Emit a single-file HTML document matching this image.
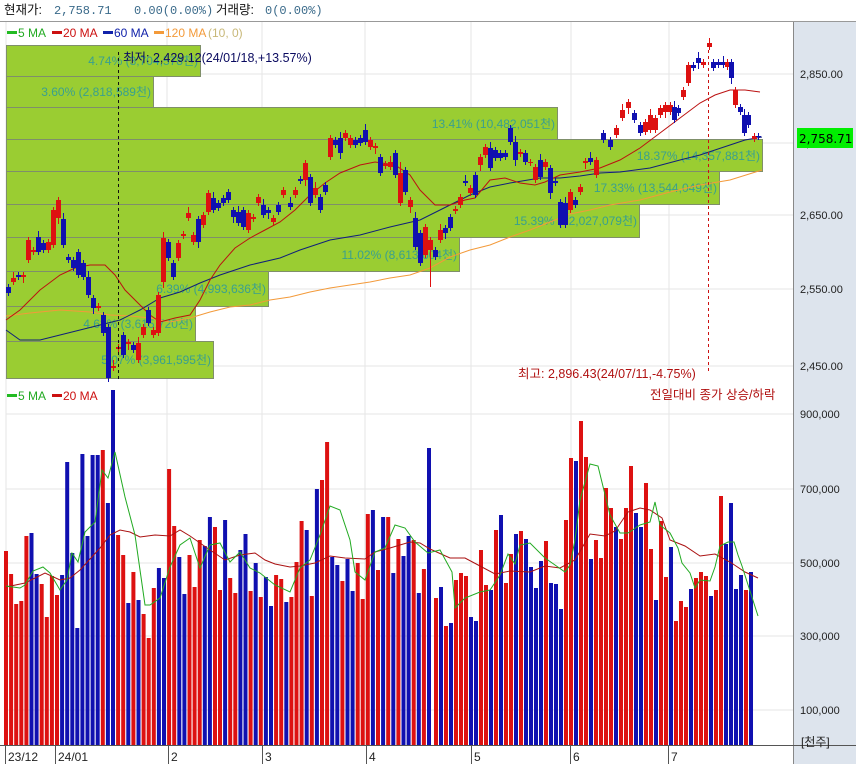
<!DOCTYPE html>
<html><head><meta charset="utf-8">
<style>
html,body{margin:0;padding:0;background:#fff;width:856px;height:764px;overflow:hidden}
svg{display:block}
text{font-family:"Liberation Sans","Noto Sans CJK KR",sans-serif}
.ax{font-family:"DejaVu Sans","Liberation Sans",sans-serif;font-size:11px;fill:#222}
</style></head><body>
<svg id="s" width="856" height="764" xmlns="http://www.w3.org/2000/svg">
<rect x="0" y="0" width="856" height="764" fill="#fff"/>
<text x="4" y="14" font-size="12.5" fill="#111">현재가:</text>
<text x="54" y="14" style="font-family:'Liberation Mono','Noto Sans CJK KR',monospace;font-size:12px" fill="#3a6a8a">2,758.71</text>
<text x="134" y="14" style="font-family:'Liberation Mono','Noto Sans CJK KR',monospace;font-size:12px" fill="#3a6a8a">0.00(0.00%)</text>
<text x="216" y="14" font-size="12.5" fill="#111">거래량:</text>
<text x="265" y="14" style="font-family:'Liberation Mono','Noto Sans CJK KR',monospace;font-size:12px" fill="#3a6a8a">0(0.00%)</text>
<line x1="0" y1="21.5" x2="856" y2="21.5" stroke="#999"/>
<rect x="793" y="22" width="63" height="742" fill="#dde4ed"/>
<line x1="793.5" y1="22" x2="793.5" y2="764" stroke="#888"/>
<line x1="0" y1="745.5" x2="856" y2="745.5" stroke="#555"/>
<g stroke="#e6e6e6">
<line x1="6" y1="74" x2="793" y2="74"/><line x1="6" y1="143" x2="793" y2="143"/><line x1="6" y1="215" x2="793" y2="215"/><line x1="6" y1="289" x2="793" y2="289"/><line x1="6" y1="366" x2="793" y2="366"/>
<line x1="6" y1="414" x2="793" y2="414"/><line x1="6" y1="489" x2="793" y2="489"/><line x1="6" y1="563" x2="793" y2="563"/><line x1="6" y1="636" x2="793" y2="636"/><line x1="6" y1="710" x2="793" y2="710"/>
<line x1="167" y1="22" x2="167" y2="745"/><line x1="262" y1="22" x2="262" y2="745"/><line x1="365" y1="22" x2="365" y2="745"/><line x1="471" y1="22" x2="471" y2="745"/><line x1="571" y1="22" x2="571" y2="745"/><line x1="669" y1="22" x2="669" y2="745"/>
<line x1="6" y1="22" x2="6" y2="745"/>
</g>
<g fill="#9acd32" stroke="#7f8f6a" stroke-width="1">
<rect x="6.5" y="45.5" width="194" height="31"/>
<rect x="6.5" y="76.5" width="147" height="31"/>
<rect x="6.5" y="107.5" width="551" height="32"/>
<rect x="6.5" y="139.5" width="756" height="32"/>
<rect x="6.5" y="171.5" width="713" height="33"/>
<rect x="6.5" y="204.5" width="633" height="33"/>
<rect x="6.5" y="237.5" width="453" height="34"/>
<rect x="6.5" y="271.5" width="262" height="35"/>
<rect x="6.5" y="306.5" width="189" height="35"/>
<rect x="6.5" y="341.5" width="207" height="37"/>
</g>
<g text-anchor="end" style="font-family:'Liberation Mono','Noto Sans CJK KR',monospace;font-size:12px" fill="#3aa08e">
<text x="198" y="65">4.74% (3,704,578천)</text>
<text x="151" y="96">3.60% (2,818,589천)</text>
<text x="555" y="128">13.41% (10,482,051천)</text>
<text x="760" y="160">18.37% (14,357,881천)</text>
<text x="717" y="192">17.33% (13,544,049천)</text>
<text x="637" y="225">15.39% (12,027,079천)</text>
<text x="457" y="259">11.02% (8,613,604천)</text>
<text x="266" y="293">6.39% (4,993,636천)</text>
<text x="193" y="328">4.62% (3,615,720천)</text>
<text x="211" y="364">5.07% (3,961,595천)</text>
</g>
<g id="ma"></g>
<g id="cd"></g>
<g id="vb"></g>
<g id="vma"></g>
<line x1="118.5" y1="52" x2="118.5" y2="380" stroke="#111" stroke-dasharray="3,3"/>
<line x1="708.5" y1="44" x2="708.5" y2="372" stroke="#cc1111" stroke-dasharray="3,3"/>
<text x="123" y="62" font-size="12.5" fill="#0a0a60">최저: 2,429.12(24/01/18,+13.57%)</text>
<text x="518" y="378" font-size="12.5" fill="#b01010">최고: 2,896.43(24/07/11,-4.75%)</text>
<text x="650" y="399" font-size="12.5" fill="#b01010">전일대비 종가 상승/하락</text>
<g font-size="12">
<rect x="7" y="31" width="10" height="3" fill="#22bb22"/><text x="18" y="37" fill="#22aa22">5 MA</text>
<rect x="52" y="31" width="10" height="3" fill="#cc1111"/><text x="63" y="37" fill="#cc1111">20 MA</text>
<rect x="103" y="31" width="10" height="3" fill="#1122aa"/><text x="114" y="37" fill="#1122aa">60 MA</text>
<rect x="154" y="31" width="10" height="3" fill="#f39a3a"/><text x="165" y="37" fill="#f39a3a">120 MA</text><text x="208" y="37" fill="#c8b878">(10, 0)</text>
<rect x="7" y="394" width="10" height="3" fill="#22bb22"/><text x="18" y="400" fill="#22aa22">5 MA</text>
<rect x="52" y="394" width="10" height="3" fill="#cc1111"/><text x="63" y="400" fill="#cc1111">20 MA</text>
</g>
<g class="ax">
<text x="800" y="78">2,850.00</text>
<text x="800" y="147">2,750.00</text>
<text x="800" y="219">2,650.00</text>
<text x="800" y="293">2,550.00</text>
<text x="800" y="370">2,450.00</text>
<text x="800" y="418">900,000</text>
<text x="800" y="493">700,000</text>
<text x="800" y="567">500,000</text>
<text x="800" y="640">300,000</text>
<text x="800" y="714">100,000</text>
</g>
<text x="801" y="746" font-size="12" fill="#222">[천주]</text>
<rect x="797" y="128" width="56" height="20" fill="#00ee00"/>
<text x="799" y="143" class="ax" style="font-size:12px;fill:#000">2,758.71</text>
<g stroke="#555"><line x1="5.5" y1="746" x2="5.5" y2="764"/><line x1="55.5" y1="746" x2="55.5" y2="764"/><line x1="168.5" y1="746" x2="168.5" y2="764"/><line x1="262.5" y1="746" x2="262.5" y2="764"/><line x1="366.5" y1="746" x2="366.5" y2="764"/><line x1="471.5" y1="746" x2="471.5" y2="764"/><line x1="570.5" y1="746" x2="570.5" y2="764"/><line x1="668.5" y1="746" x2="668.5" y2="764"/></g>
<g font-size="12" fill="#222">
<text x="8" y="761">23/12</text><text x="58" y="761">24/01</text><text x="171" y="761">2</text><text x="265" y="761">3</text><text x="369" y="761">4</text><text x="474" y="761">5</text><text x="573" y="761">6</text><text x="671" y="761">7</text>
</g>
</svg>
<script>
var NS="http://www.w3.org/2000/svg";
function el(p,t,a){var e=document.createElementNS(NS,t);for(var k in a)e.setAttribute(k,a[k]);p.appendChild(e);return e;}
function pl(g,pts,c,w){el(g,"polyline",{points:pts.map(function(p){return p.join(",")}).join(" "),fill:"none",stroke:c,"stroke-width":w||1});}
var R="#dd1111",B="#1010b0";
var ma=document.getElementById("ma");
pl(ma,[[6,316],[30,313],[60,310],[90,312],[110,315],[130,316],[150,318],[170,322],[190,318],[210,312],[230,307],[250,305],[270,300],[290,297],[310,292],[330,288],[350,285],[370,282],[390,278],[410,275],[430,268],[450,257],[470,250],[490,245],[510,237],[530,230],[550,222],[570,214],[590,210],[610,205],[640,200],[670,192],[700,185],[730,180],[762,170]],"#f39a3a");
pl(ma,[[6,330],[20,340],[40,340],[60,335],[80,330],[100,325],[120,320],[140,310],[160,298],[180,292],[200,283],[220,275],[250,265],[280,258],[300,250],[330,240],[360,235],[390,227],[420,220],[450,205],[470,195],[490,187],[510,183],[540,178],[560,178],[580,176],[600,173],[620,172],[650,168],[680,160],[700,155],[730,145],[745,140],[762,137]],"#10207a");
pl(ma,[[6,320],[20,310],[40,290],[60,275],[75,268],[90,265],[105,265],[115,275],[125,290],[140,305],[150,315],[160,322],[175,318],[190,315],[200,300],[210,280],[220,265],[235,248],[250,238],[265,230],[280,222],[295,210],[310,195],[325,183],[340,173],[360,165],[375,162],[395,165],[410,175],[420,190],[435,205],[450,205],[465,200],[475,198],[490,180],[505,178],[520,183],[535,185],[545,182],[560,175],[580,172],[600,168],[620,160],[640,148],[660,133],[680,118],[700,103],[715,95],[730,90],[745,90],[760,92]],"#bb1111");
var C=[[8,287,293,B],[13,278,282,R],[18,275,277,B],[23,275,277,R],[28,240,260,R],[33,250,252,R],[38,237,252,B],[43,243,250,B],[48,242,250,R],[53,210,245,R],[58,200,218,R],[63,219,245,B],[68,257,260,B],[73,260,268,B],[78,252,275,B],[83,263,277,B],[88,277,295,B],[93,298,308,B],[98,306,308,R],[103,315,333,B],[108,327,378,B],[113,366,368,R],[118,347,349,R],[123,335,355,B],[128,342,344,R],[133,345,350,B],[138,343,360,R],[143,327,335,R],[148,310,323,B],[153,330,335,R],[158,295,333,R],[163,238,282,R],[168,242,258,B],[173,263,277,B],[178,243,258,R],[183,234,236,R],[188,213,218,R],[193,235,242,R],[198,219,242,B],[203,215,225,R],[208,193,212,R],[213,198,210,B],[218,203,208,B],[223,198,203,B],[228,192,200,B],[233,210,217,B],[238,212,223,B],[243,210,227,B],[248,213,230,R],[253,217,219,R],[258,197,203,R],[263,205,215,B],[268,210,213,B],[273,218,222,R],[278,205,212,B],[283,190,195,R],[290,203,207,B],[295,190,195,R],[300,179,181,B],[305,163,180,R],[310,177,203,B],[315,188,195,R],[320,197,210,B],[325,185,192,B],[330,138,157,R],[335,140,145,B],[340,138,153,B],[345,133,138,R],[350,138,145,R],[355,140,145,B],[360,138,143,B],[365,130,142,B],[370,140,147,R],[375,146,148,R],[380,157,173,B],[385,164,166,R],[390,162,167,R],[395,153,175,B],[400,173,203,R],[405,170,192,B],[410,200,207,R],[415,218,247,B],[420,233,263,B],[425,227,255,R],[430,240,250,R],[435,250,257,B],[440,230,240,R],[445,228,233,B],[450,217,228,B],[455,209,211,R],[460,197,205,R],[465,181,183,B],[470,188,193,R],[475,175,195,B],[480,157,165,R],[485,147,155,R],[490,148,168,B],[495,150,158,B],[500,153,158,B],[505,153,157,B],[510,128,142,B],[515,142,160,B],[520,152,154,R],[525,153,162,B],[530,162,163,R],[535,167,180,R],[540,160,177,B],[545,162,167,R],[550,168,193,B],[555,181,183,B],[560,202,225,B],[565,203,225,B],[570,192,210,R],[575,200,205,B],[580,187,192,R],[585,161,163,R],[590,158,162,B],[596,160,175,R],[603,133,140,B],[610,140,147,B],[616,128,135,R],[622,110,118,R],[628,102,108,R],[634,113,120,B],[640,125,133,B],[645,122,132,R],[650,115,130,R],[655,118,130,R],[660,108,115,R],[665,105,112,R],[670,105,112,R],[674,107,120,B],[678,108,113,B],[683,90,97,R],[688,65,83,R],[693,65,68,B],[698,58,63,B],[703,62,65,R],[709,43,47,R],[713,62,68,B],[718,62,65,B],[723,62,65,B],[727,62,67,R],[731,62,78,B],[735,90,105,R],[740,107,112,B],[744,115,133,B],[748,115,125,B],[754,136,139,R],[758,136,137,B]];
var cd=document.getElementById("cd");
C.forEach(function(c,i){var w=(i%7==3)?6:3;var lo=c[2]+w,hi=c[1]-((i%5==1)?6:3);
if(c[0]==108)lo=382; if(c[0]==430)lo=287; if(c[0]==709)hi=38; if(c[0]==400)hi=162;
el(cd,"line",{x1:c[0]+0.5,y1:hi,x2:c[0]+0.5,y2:lo,stroke:c[3]});
el(cd,"rect",{x:c[0]-2,y:c[1],width:5,height:Math.max(1,c[2]-c[1]),fill:c[3]});});
var A=[[551,R],[574,R],[604,R],[601,R],[536,R],[533,B],[574,B],[584,R],[617,R],[576,R],[595,R],[575,B],[462,B],[553,B],[628,B],[454,B],[536,B],[455,B],[455,B],[450,R],[503,B],[390,B],[535,R],[555,R],[603,B],[572,R],[600,B],[614,R],[638,R],[588,R],[568,B],[578,B],[469,R],[526,R],[557,B],[594,B],[555,R],[587,R],[540,R],[546,B],[517,B],[527,R],[590,R],[520,B],[578,R],[593,R],[550,B],[534,B],[591,R],[563,B],[597,R],[577,B],[606,B],[575,R],[579,R],[602,B],[597,R],[562,R],[521,R],[530,B],[596,R],[489,B],[480,R],[442,R],[557,B],[565,B],[581,R],[559,B],[591,B],[563,R],[599,R],[514,R],[510,B],[570,R],[517,B],[517,R],[573,B],[539,R],[556,B],[536,B],[540,R],[593,B],[569,R],[448,B]];
var Bv=[[598,R],[587,B],[626,R],[623,B],[580,R],[573,R],[576,R],[617,B],[621,B],[550,R],[585,R],[590,B],[530,R],[515,B],[583,R],[554,R],[534,B],[531,R],[539,B],[567,B],[588,B],[561,B],[541,R],[583,B],[584,B],[609,B],[520,R],[458,R],[461,B],[421,R],[457,R],[559,B],[540,R],[558,R],[488,R],[508,R],[527,B],[539,R],[508,R],[466,R],[513,B],[527,B],[483,R],[549,R],[600,B],[521,R],[577,R],[547,B],[621,R],[601,R],[607,R],[589,B],[578,R],[572,R],[576,R],[596,B],[590,R],[496,R],[544,B],[503,B],[589,B],[575,B],[590,R],[572,B]];
var vb=document.getElementById("vb");
A.forEach(function(v,i){var x=6+i*423/(A.length-1);el(vb,"rect",{x:(x-2).toFixed(1),y:v[0],width:4,height:745-v[0],fill:v[1]});});
Bv.forEach(function(v,i){var x=436+i*5;el(vb,"rect",{x:x-2,y:v[0],width:4,height:745-v[0],fill:v[1]});});
var vma=document.getElementById("vma");
pl(vma,[[6,587],[25,583],[45,573],[60,580],[70,578],[80,570],[100,548],[110,535],[120,530],[130,532],[140,537],[155,535],[170,536],[180,530],[190,536],[210,550],[225,560],[240,555],[255,553],[265,560],[275,564],[290,567],[300,566],[315,563],[330,556],[345,558],[365,559],[375,552],[390,548],[410,542],[420,543],[430,549],[450,558],[465,558],[480,566],[495,574],[510,571],[530,572],[545,566],[560,568],[575,560],[590,534],[605,536],[615,531],[628,512],[640,508],[650,510],[662,518],[670,540],[685,546],[700,556],[715,554],[730,562],[745,572],[758,578]],"#aa1111");
pl(vma,[[6,586],[20,588],[25,585],[33,571],[43,567],[50,573],[60,590],[67,580],[72,553],[78,562],[85,532],[95,522],[102,470],[108,478],[115,452],[125,497],[135,535],[145,605],[150,605],[160,598],[170,567],[180,545],[190,538],[200,568],[210,545],[220,543],[230,562],[240,552],[250,568],[260,573],[275,585],[290,592],[300,568],[310,560],[320,535],[330,506],[340,510],[350,540],[355,572],[365,580],[375,552],[385,548],[395,525],[405,528],[415,542],[428,553],[440,550],[452,572],[455,608],[465,598],[480,592],[490,590],[500,575],[508,554],[515,564],[520,545],[530,543],[545,558],[555,565],[565,572],[570,565],[575,540],[580,500],[590,464],[598,466],[610,515],[620,533],[628,533],[640,525],[650,522],[655,502],[660,525],[670,533],[678,548],[682,563],[690,573],[695,588],[700,580],[710,581],[715,567],[720,546],[728,542],[734,542],[738,555],[742,566],[758,616]],"#22aa22");
</script>
</body></html>
